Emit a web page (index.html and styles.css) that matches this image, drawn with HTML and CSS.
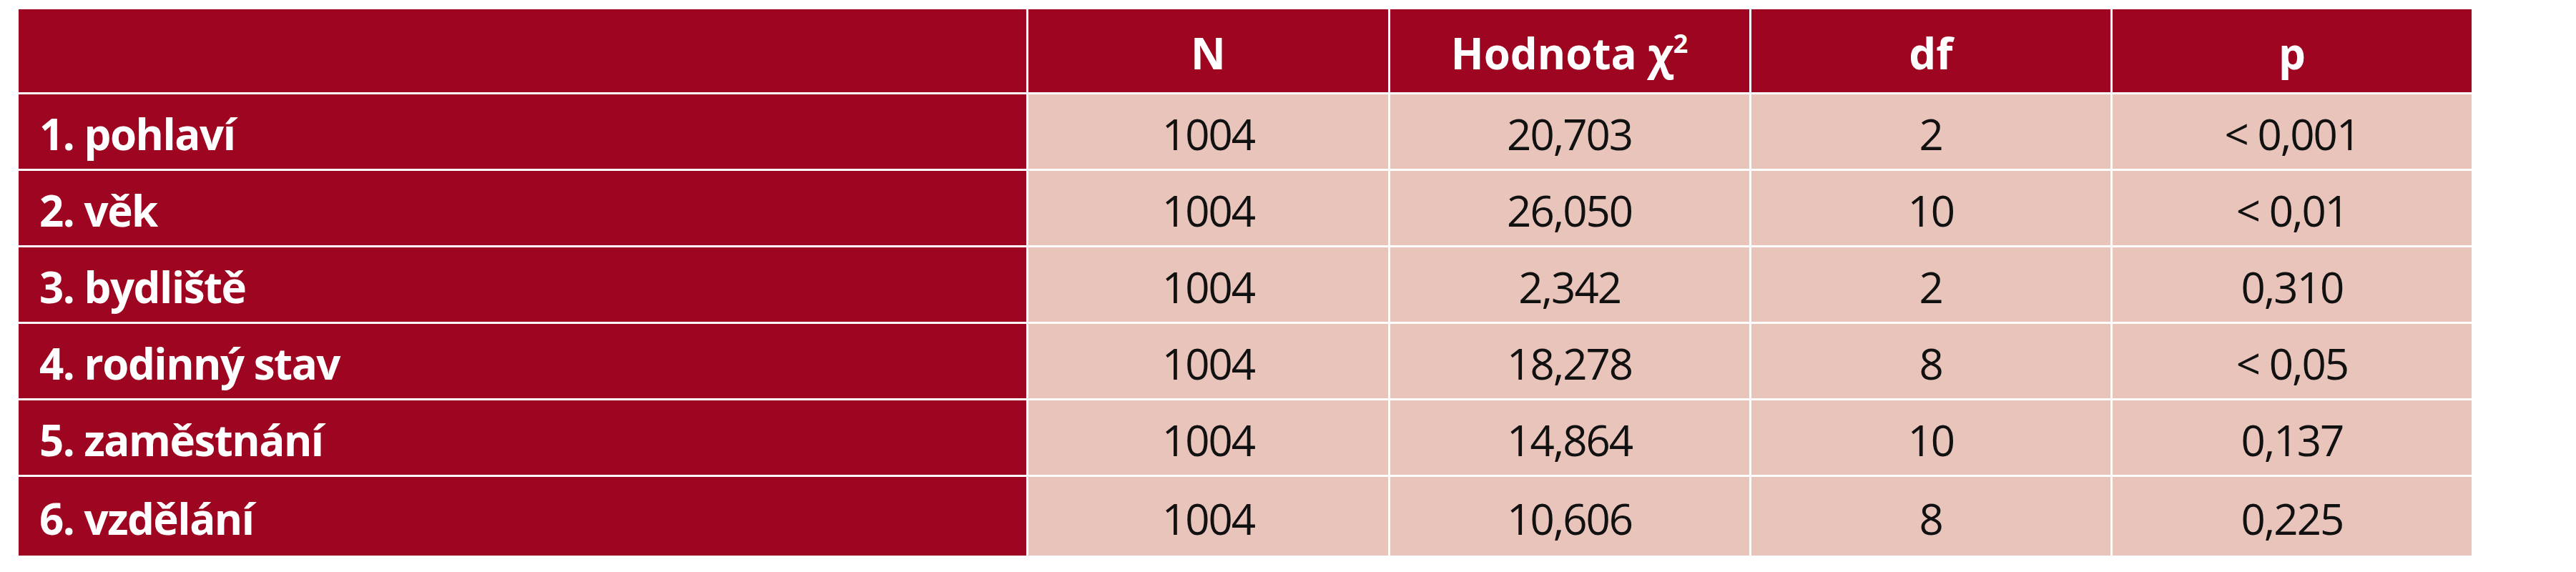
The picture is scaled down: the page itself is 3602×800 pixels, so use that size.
FILE: index.html
```html
<!DOCTYPE html>
<html lang="cs">
<head>
<meta charset="utf-8">
<title>Tabulka</title>
<link rel="stylesheet" href="styles.css">
</head>
<body>
<table class="stats">
  <colgroup>
    <col class="c-label">
    <col class="c-val">
    <col class="c-val">
    <col class="c-val">
    <col class="c-val">
  </colgroup>
  <thead>
    <tr class="head-row">
      <th class="label"></th>
      <th>N</th>
      <th>Hodnota χ<sup>2</sup></th>
      <th>df</th>
      <th>p</th>
    </tr>
  </thead>
  <tbody>
    <tr><th class="label">1. pohlaví</th><td>1004</td><td>20,703</td><td>2</td><td>&lt; 0,001</td></tr>
    <tr><th class="label">2. věk</th><td>1004</td><td>26,050</td><td>10</td><td>&lt; 0,01</td></tr>
    <tr><th class="label">3. bydliště</th><td>1004</td><td>2,342</td><td>2</td><td>0,310</td></tr>
    <tr><th class="label">4. rodinný stav</th><td>1004</td><td>18,278</td><td>8</td><td>&lt; 0,05</td></tr>
    <tr><th class="label">5. zaměstnání</th><td>1004</td><td>14,864</td><td>10</td><td>0,137</td></tr>
    <tr class="last"><th class="label">6. vzdělání</th><td>1004</td><td>10,606</td><td>8</td><td>0,225</td></tr>
  </tbody>
</table>
</body>
</html>
```

FILE: styles.css
```css
html, body {
  margin: 0;
  padding: 0;
  background: #ffffff;
}

body {
  font-family: "Open Sans", "Noto Sans", sans-serif;
}

.stats {
  border-collapse: separate;
  border-spacing: 3px;
  margin: 10px 0 0 23px;
  table-layout: fixed;
  width: 3436px;
}

.c-label { width: 1409px; }
.c-val { width: 502px; }

.stats th,
.stats td {
  padding: 6px 0 0 0;
  height: 98px;
  font-size: 60px;
  line-height: 1;
  text-align: center;
  vertical-align: middle;
  box-sizing: border-box;
}

.stats thead th {
  background: #9d0520;
  color: #ffffff;
  font-weight: 700;
  height: 116px;
  padding-top: 6px;
}

.stats th.label {
  background: #9d0520;
  color: #ffffff;
  font-weight: 700;
  text-align: left;
  padding-left: 29px;
  letter-spacing: -1.5px;
}

.stats td {
  background: #e8c4bb;
  color: #111111;
  font-weight: 400;
  letter-spacing: -2px;
}

.stats tbody tr th,
.stats tbody tr td {
  height: 104px;
}

.stats tbody tr.last th,
.stats tbody tr.last td {
  height: 110px;
}

.stats sup {
  font-size: 0.6em;
  line-height: 0;
  vertical-align: 0.65em;
}
```
